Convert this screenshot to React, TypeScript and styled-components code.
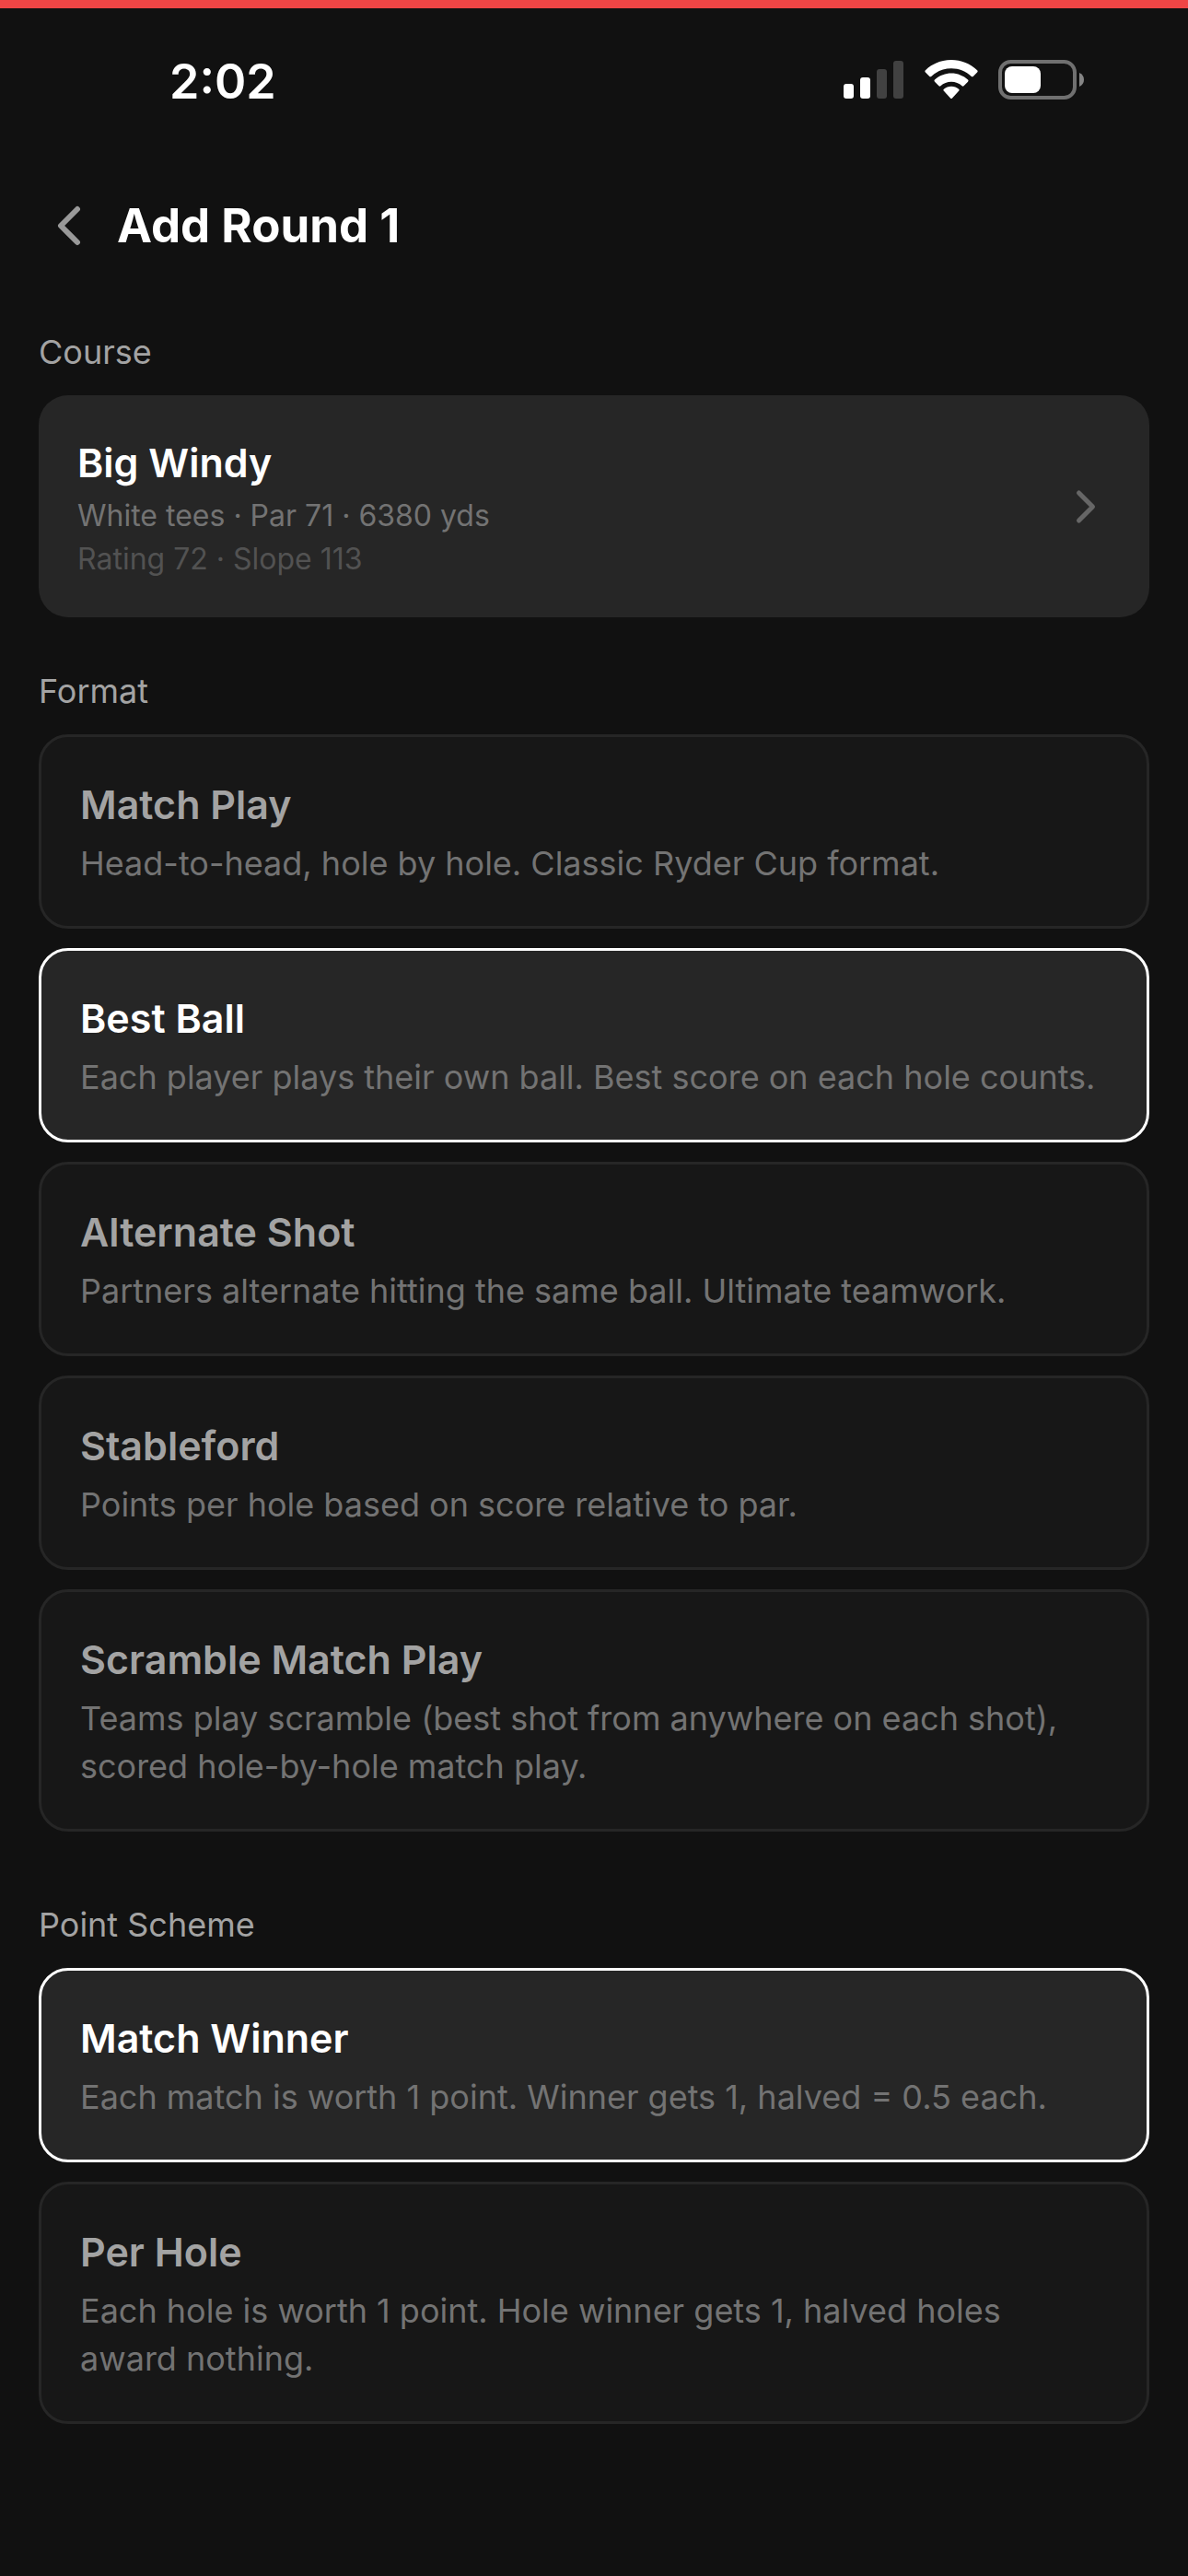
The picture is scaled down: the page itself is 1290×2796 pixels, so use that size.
import { useState } from "react";
import styled, { createGlobalStyle } from "styled-components";

const color = {
  page: "#111111",
  accent: "#f04545",
  surface: "#171717",
  raised: "#262626",
  white: "#ffffff",
  label: "#a3a3a3",
  muted: "#737373",
  faint: "#525252",
  backIcon: "#999999",
  rowIcon: "#666666",
};

const GlobalStyle = createGlobalStyle`
  *, *::before, *::after { box-sizing: border-box; }
  body {
    margin: 0;
    background: ${color.page};
    color: ${color.white};
    font-family: Inter, "Liberation Sans", sans-serif;
  }
`;

const Page = styled.div`
  min-height: 100vh;
  border-top: 9px solid ${color.accent};
  background: ${color.page};
`;

const StatusBar = styled.div`
  display: flex;
  align-items: center;
  justify-content: space-between;
  height: 155px;
  padding: 0 112px 0 184px;
`;

const Clock = styled.time`
  padding-top: 4px;
  font-size: 52px;
  line-height: 60px;
  font-weight: 600;
`;

const StatusIcons = styled.div`
  display: flex;
  align-items: center;
  gap: 22px;

  svg { display: block; }
`;

const Header = styled.header`
  display: flex;
  align-items: center;
  gap: 16px;
  height: 161px;
  padding: 0 39px;
`;

const BackButton = styled.button`
  display: flex;
  padding: 0;
  border: 0;
  background: none;
  color: ${color.backIcon};
  cursor: pointer;
`;

const Title = styled.h1`
  margin: 0;
  font-size: 51px;
  line-height: 73px;
  font-weight: 700;
`;

const Form = styled.main`
  display: flex;
  flex-direction: column;
  gap: 54px;
  padding: 31px 42px 120px;
`;

const Section = styled.section``;

const Group = styled.fieldset`
  min-width: 0;
  margin: 0;
  padding: 0;
  border: 0;
`;

const SectionLabel = styled.h2`
  margin: 0 0 21px;
  color: ${color.label};
  font-size: 36px;
  line-height: 52px;
  font-weight: 400;
`;

const CourseCard = styled.button`
  display: flex;
  align-items: center;
  justify-content: space-between;
  width: 100%;
  padding: 42px 39px 42px 42px;
  border: 0;
  border-radius: 32px;
  background: ${color.raised};
  color: ${color.rowIcon};
  font-family: inherit;
  text-align: left;
  cursor: pointer;
`;

const CourseInfo = styled.span`
  display: flex;
  flex-direction: column;
  gap: 5px;
`;

const CardTitle = styled.span<{ $active?: boolean }>`
  color: ${(p) => (p.$active ? color.white : color.label)};
  font-size: 43px;
  line-height: 63px;
  font-weight: 600;
`;

const CourseMeta = styled.span<{ $faint?: boolean }>`
  color: ${(p) => (p.$faint ? color.faint : color.muted)};
  font-size: 32px;
  line-height: 42px;
`;

const Option = styled.label<{ $active: boolean }>`
  position: relative;
  display: flex;
  flex-direction: column;
  gap: 6px;
  margin-bottom: 21px;
  padding: 42px;
  border: 3px solid ${(p) => (p.$active ? color.white : color.raised)};
  border-radius: 32px;
  background: ${(p) => (p.$active ? color.raised : color.surface)};
  cursor: pointer;
`;

const Radio = styled.input`
  position: absolute;
  inset: 0;
  width: 100%;
  height: 100%;
  margin: 0;
  opacity: 0;
  cursor: pointer;
`;

const Description = styled.span`
  padding-right: 8px;
  color: ${color.muted};
  font-size: 36px;
  line-height: 52px;
`;

function SignalIcon() {
  return (
    <svg width="66" height="43" viewBox="0 0 66 43" aria-hidden="true">
      <rect x="0" y="26" width="11" height="16" rx="3" fill="#fff" />
      <rect x="18" y="19" width="11" height="23" rx="3" fill="#fff" />
      <rect x="36" y="10" width="11" height="32" rx="3" fill="#414141" />
      <rect x="54" y="1" width="11" height="41" rx="3" fill="#414141" />
    </svg>
  );
}

function WifiIcon() {
  return (
    <svg width="58" height="43" viewBox="0 0 58 43" fill="#fff" aria-hidden="true">
      <path d="M29 0C18.200 0 8.300 4.200 .900 11.300C.200 12 .200 12.800 .900 13.500L5.300 17.900C5.900 18.500 6.600 18.500 7.200 17.900C13 12.400 20.600 9.200 29 9.200S45 12.400 50.800 17.900C51.400 18.500 52.100 18.500 52.700 17.900L57.100 13.500C57.800 12.800 57.800 12 57.100 11.300C49.700 4.200 39.800 0 29 0Z" />
      <path d="M29 14.500C22.100 14.500 15.800 17.200 11 21.500C10.300 22.200 10.300 23 11 23.700L15.500 28.200C16.100 28.800 16.700 28.800 17.400 28.200C20.500 25.400 24.600 23.700 29 23.700S37.500 25.400 40.600 28.200C41.300 28.800 41.900 28.800 42.500 28.200L47 23.700C47.700 23 47.700 22.200 47 21.500C42.200 17.200 35.900 14.500 29 14.500Z" />
      <path d="M29 28.700C25.900 28.700 23.100 29.800 20.900 31.700C20.200 32.300 20.200 33.100 20.900 33.800L28 41.400C28.700 42.100 29.300 42.100 30 41.400L37.100 33.800C37.800 33.100 37.800 32.300 37.100 31.700C34.900 29.800 32.100 28.700 29 28.700Z" />
    </svg>
  );
}

function BatteryIcon() {
  return (
    <svg width="94" height="43" viewBox="0 0 94 43" aria-hidden="true">
      <rect x="2" y="2" width="81" height="39" rx="11.500" fill="none" stroke="#707070" strokeWidth="4" />
      <rect x="7" y="7" width="39" height="29" rx="8" fill="#fff" />
      <path d="M88 14C91.200 15.200 93 18 93 21.500S91.200 27.800 88 29Z" fill="#858585" />
    </svg>
  );
}

function Chevron({ size, direction }: { size: number; direction: "left" | "right" }) {
  return (
    <svg
      width={size}
      height={size}
      viewBox="0 0 24 24"
      fill="none"
      stroke="currentColor"
      strokeWidth="2"
      strokeLinecap="round"
      strokeLinejoin="round"
      aria-hidden="true"
    >
      <path d={direction === "left" ? "M15 18l-6-6 6-6" : "M9 18l6-6-6-6"} />
    </svg>
  );
}

interface Choice {
  id: string;
  title: string;
  text: string;
}

const formats: Choice[] = [
  { id: "match", title: "Match Play", text: "Head-to-head, hole by hole. Classic Ryder Cup format." },
  { id: "best-ball", title: "Best Ball", text: "Each player plays their own ball. Best score on each hole counts." },
  { id: "alternate", title: "Alternate Shot", text: "Partners alternate hitting the same ball. Ultimate teamwork." },
  { id: "stableford", title: "Stableford", text: "Points per hole based on score relative to par." },
  {
    id: "scramble",
    title: "Scramble Match Play",
    text: "Teams play scramble (best shot from anywhere on each shot), scored hole-by-hole match play.",
  },
];

const schemes: Choice[] = [
  { id: "winner", title: "Match Winner", text: "Each match is worth 1 point. Winner gets 1, halved = 0.5 each." },
  { id: "per-hole", title: "Per Hole", text: "Each hole is worth 1 point. Hole winner gets 1, halved holes award nothing." },
];

interface ChoiceGroupProps {
  label: string;
  name: string;
  choices: Choice[];
  initial: string;
}

function ChoiceGroup({ label, name, choices, initial }: ChoiceGroupProps) {
  const [selected, setSelected] = useState(initial);
  return (
    <Group aria-labelledby={`${name}-label`}>
      <SectionLabel id={`${name}-label`}>{label}</SectionLabel>
      {choices.map((choice) => {
        const active = choice.id === selected;
        return (
          <Option key={choice.id} $active={active}>
            <Radio
              type="radio"
              name={name}
              value={choice.id}
              checked={active}
              onChange={() => setSelected(choice.id)}
            />
            <CardTitle $active={active}>{choice.title}</CardTitle>
            <Description>{choice.text}</Description>
          </Option>
        );
      })}
    </Group>
  );
}

export default function App() {
  return (
    <Page>
      <GlobalStyle />
      <StatusBar>
        <Clock>2:02</Clock>
        <StatusIcons>
          <SignalIcon />
          <WifiIcon />
          <BatteryIcon />
        </StatusIcons>
      </StatusBar>
      <Header>
        <BackButton type="button" aria-label="Back">
          <Chevron size={72} direction="left" />
        </BackButton>
        <Title>Add Round 1</Title>
      </Header>
      <Form>
        <Section>
          <SectionLabel>Course</SectionLabel>
          <CourseCard type="button">
            <CourseInfo>
              <CardTitle $active>Big Windy</CardTitle>
              <CourseMeta>White tees · Par 71 · 6380 yds</CourseMeta>
              <CourseMeta $faint>Rating 72 · Slope 113</CourseMeta>
            </CourseInfo>
            <Chevron size={60} direction="right" />
          </CourseCard>
        </Section>
        <ChoiceGroup label="Format" name="format" choices={formats} initial="best-ball" />
        <ChoiceGroup label="Point Scheme" name="scheme" choices={schemes} initial="winner" />
      </Form>
    </Page>
  );
}
